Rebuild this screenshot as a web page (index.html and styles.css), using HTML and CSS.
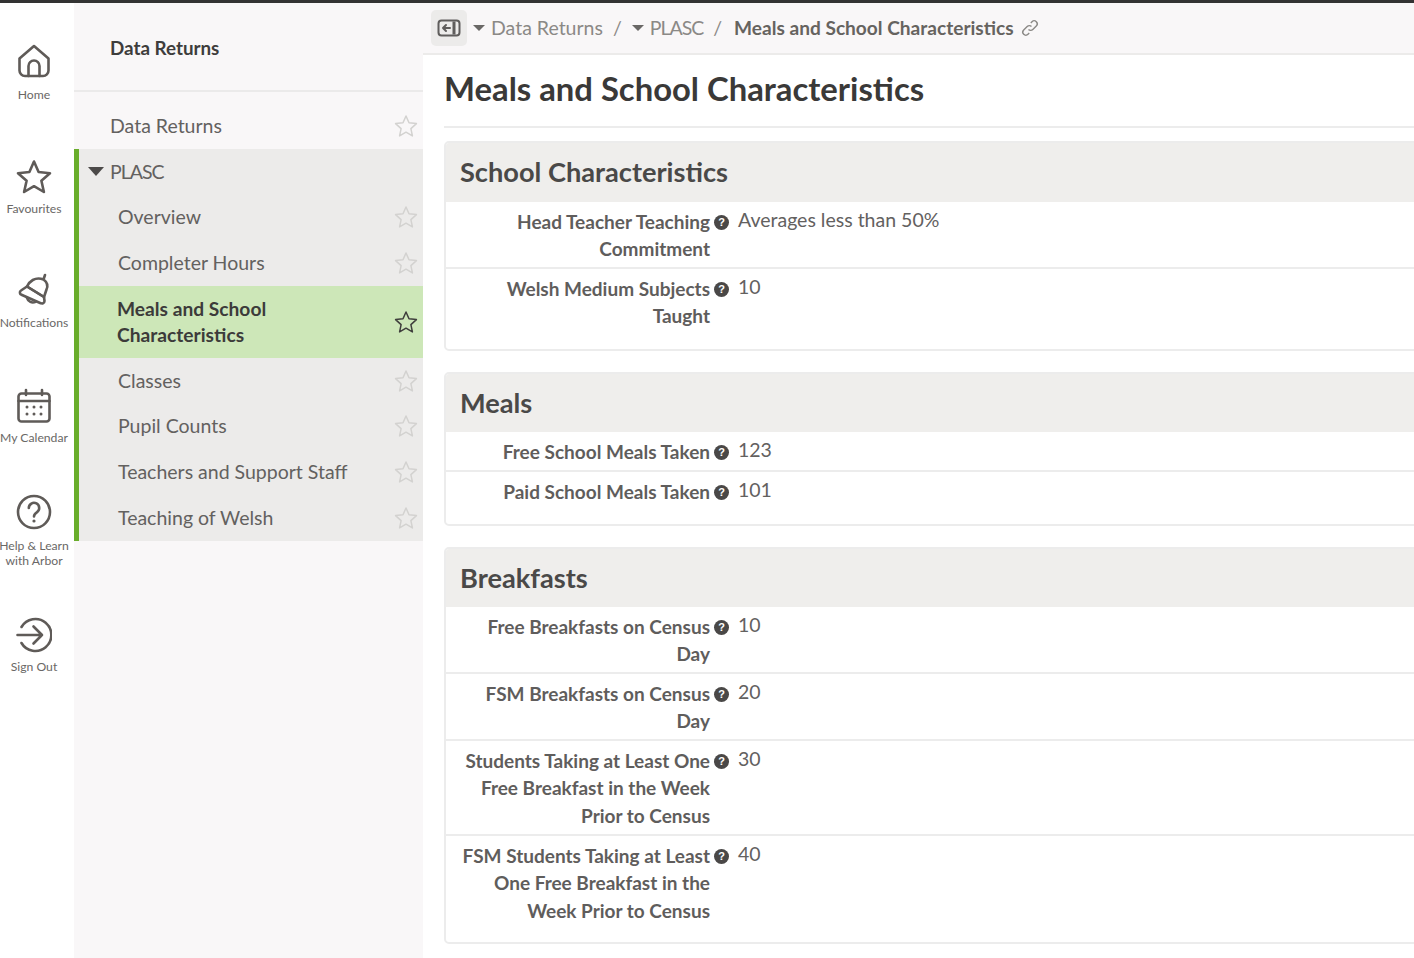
FILE: index.html
```html
<!DOCTYPE html>
<html lang="en">
<head>
<meta charset="utf-8">
<title>Meals and School Characteristics</title>
<link rel="stylesheet" href="styles.css">
</head>
<body>
<div class="topbar"></div>
<div class="app">
  <nav class="rail">
    <a class="rail-item rail-home">
      <svg class="rail-icon" viewBox="0 0 36 36"><path d="M3.5 15.5 L18 3 L32.5 15.5 V27.5 a5.5 5.5 0 0 1 -5.5 5.5 H9 a5.5 5.5 0 0 1 -5.5 -5.5 Z"/><path d="M12.5 33 V23 a5.5 5.5 0 0 1 11 0 V33"/></svg>
      <span>Home</span>
    </a>
    <a class="rail-item rail-fav">
      <svg class="rail-icon" viewBox="0 0 36 36"><path d="M18 2.5 L22.6 13 L34 14.2 L25.4 21.8 L27.9 33 L18 27.2 L8.1 33 L10.6 21.8 L2 14.2 L13.4 13 Z"/></svg>
      <span>Favourites</span>
    </a>
    <a class="rail-item rail-notif">
      <svg class="rail-icon" viewBox="0 0 36 36"><path d="M29 2 L27.5 6.5 C31 9 32 13 30.5 16.5 L28 24 L11 13.5 C13 9 19 3 27.5 6.5"/><path d="M5 17.5 L11 13.5 L28 24 L28.5 28 a2.6 2.6 0 0 1 -3.8 2.2 L5.5 21.8 a2.4 2.4 0 0 1 -.5 -4.3 Z"/><path d="M11 25 a6 6 0 0 0 8.5 3.8"/></svg>
      <span>Notifications</span>
    </a>
    <a class="rail-item rail-cal">
      <svg class="rail-icon" viewBox="0 0 36 36"><rect x="2.5" y="5.5" width="31" height="28" rx="3"/><path d="M2.5 13 H33.5 M10 2 V7 M26 2 V7"/><g class="dots"><circle cx="11" cy="19" r="1.5"/><circle cx="18" cy="19" r="1.5"/><circle cx="25" cy="19" r="1.5"/><circle cx="11" cy="26" r="1.5"/><circle cx="18" cy="26" r="1.5"/><circle cx="25" cy="26" r="1.5"/></g></svg>
      <span>My Calendar</span>
    </a>
    <a class="rail-item rail-help">
      <svg class="rail-icon" viewBox="0 0 36 36"><circle cx="18" cy="18" r="16"/><path d="M12.8 14 a5.2 5.2 0 1 1 8 4.4 c-2 1.3 -2.8 2 -2.8 4"/><circle class="dot" cx="18" cy="27" r="1.6"/></svg>
      <span>Help &amp; Learn<br>with Arbor</span>
    </a>
    <a class="rail-item rail-out">
      <svg class="rail-icon" viewBox="0 0 36 36"><path d="M5.5 10 a16 16 0 1 1 0 16"/><path d="M1.5 18 H26 M17.5 9.5 L26 18 L17.5 26.5"/></svg>
      <span>Sign Out</span>
    </a>
  </nav>

  <aside class="side">
    <div class="side-title">Data Returns</div>
    <div class="side-link root"><span>Data Returns</span><svg class="star" viewBox="0 0 24 24"><path d="M12 2 L15 8.8 L22.4 9.6 L16.9 14.6 L18.4 21.9 L12 18.2 L5.6 21.9 L7.1 14.6 L1.6 9.6 L9 8.8 Z"/></svg></div>
    <div class="group">
      <div class="group-head"><i class="caret"></i><span class="short">PLASC</span></div>
      <div class="side-link"><span>Overview</span><svg class="star" viewBox="0 0 24 24"><path d="M12 2 L15 8.8 L22.4 9.6 L16.9 14.6 L18.4 21.9 L12 18.2 L5.6 21.9 L7.1 14.6 L1.6 9.6 L9 8.8 Z"/></svg></div>
      <div class="side-link"><span>Completer Hours</span><svg class="star" viewBox="0 0 24 24"><path d="M12 2 L15 8.8 L22.4 9.6 L16.9 14.6 L18.4 21.9 L12 18.2 L5.6 21.9 L7.1 14.6 L1.6 9.6 L9 8.8 Z"/></svg></div>
      <div class="side-link active"><span>Meals and School<br>Characteristics</span><svg class="star" viewBox="0 0 24 24"><path d="M12 2 L15 8.8 L22.4 9.6 L16.9 14.6 L18.4 21.9 L12 18.2 L5.6 21.9 L7.1 14.6 L1.6 9.6 L9 8.8 Z"/></svg></div>
      <div class="side-link"><span>Classes</span><svg class="star" viewBox="0 0 24 24"><path d="M12 2 L15 8.8 L22.4 9.6 L16.9 14.6 L18.4 21.9 L12 18.2 L5.6 21.9 L7.1 14.6 L1.6 9.6 L9 8.8 Z"/></svg></div>
      <div class="side-link"><span>Pupil Counts</span><svg class="star" viewBox="0 0 24 24"><path d="M12 2 L15 8.8 L22.4 9.6 L16.9 14.6 L18.4 21.9 L12 18.2 L5.6 21.9 L7.1 14.6 L1.6 9.6 L9 8.8 Z"/></svg></div>
      <div class="side-link"><span>Teachers and Support Staff</span><svg class="star" viewBox="0 0 24 24"><path d="M12 2 L15 8.8 L22.4 9.6 L16.9 14.6 L18.4 21.9 L12 18.2 L5.6 21.9 L7.1 14.6 L1.6 9.6 L9 8.8 Z"/></svg></div>
      <div class="side-link"><span>Teaching of Welsh</span><svg class="star" viewBox="0 0 24 24"><path d="M12 2 L15 8.8 L22.4 9.6 L16.9 14.6 L18.4 21.9 L12 18.2 L5.6 21.9 L7.1 14.6 L1.6 9.6 L9 8.8 Z"/></svg></div>
    </div>
  </aside>

  <main class="main">
    <div class="crumbs">
      <span class="toggle"><svg viewBox="0 0 24 20"><rect x="1.5" y="2.5" width="21" height="15" rx="3"/><path class="bar" d="M17 3.5 V16.5"/><path d="M13 10 H6 M9 7 L6 10 L9 13"/></svg></span>
      <i class="caret small"></i><span class="crumb">Data Returns</span><span class="sep">/</span>
      <i class="caret small"></i><span class="crumb short">PLASC</span><span class="sep">/</span>
      <strong class="crumb-current">Meals and School Characteristics</strong>
      <svg class="link-icon" viewBox="0 0 20 20"><path d="M8.5 11.5 a3 3 0 0 0 4.3 0 l3.5 -3.5 a3 3 0 0 0 -4.3 -4.3 l-1.2 1.2"/><path d="M11.5 8.5 a3 3 0 0 0 -4.3 0 l-3.5 3.5 a3 3 0 0 0 4.3 4.3 l1.2 -1.2"/></svg>
    </div>
    <div class="content">
      <h1>Meals and School Characteristics</h1>

      <section class="card">
        <h2>School Characteristics</h2>
        <div class="row h67"><div class="label">Head Teacher Teaching<br>Commitment</div><i class="q">?</i><div class="value">Averages less than 50%</div></div>
        <div class="row h80 last"><div class="label">Welsh Medium Subjects<br>Taught</div><i class="q">?</i><div class="value">10</div></div>
      </section>

      <section class="card">
        <h2>Meals</h2>
        <div class="row h40"><div class="label">Free School Meals Taken</div><i class="q">?</i><div class="value">123</div></div>
        <div class="row h53 last"><div class="label">Paid School Meals Taken</div><i class="q">?</i><div class="value">101</div></div>
      </section>

      <section class="card">
        <h2>Breakfasts</h2>
        <div class="row h67"><div class="label">Free Breakfasts on Census<br>Day</div><i class="q">?</i><div class="value">10</div></div>
        <div class="row h67"><div class="label">FSM Breakfasts on Census<br>Day</div><i class="q">?</i><div class="value">20</div></div>
        <div class="row h95"><div class="label">Students Taking at Least One<br>Free Breakfast in the Week<br>Prior to Census</div><i class="q">?</i><div class="value">30</div></div>
        <div class="row h105 last"><div class="label">FSM Students Taking at Least<br>One Free Breakfast in the<br>Week Prior to Census</div><i class="q">?</i><div class="value">40</div></div>
      </section>
    </div>
  </main>
</div>
</body>
</html>
```
FILE: styles.css
```css
* { box-sizing: border-box; }
html, body { margin: 0; height: 100%; overflow: hidden; }
body { font-family: "Lato", "Noto Sans", sans-serif; font-size: 19.5px; color: #5f5d5c; background: #fff; }
.topbar { height: 3px; background: #333; }
.app { display: flex; height: 955px; }

.rail { width: 74px; flex: none; background: #fff; padding-right: 6px; }
.rail-item { display: flex; flex-direction: column; align-items: center; font-size: 12.2px; line-height: 15px; color: #6a6866; text-align: center; white-space: nowrap; }
.rail-icon { width: 36px; height: 36px; fill: none; stroke: #5f5b58; stroke-width: 2.6; stroke-linejoin: round; stroke-linecap: round; margin-bottom: 6px; }
.rail-icon .dots circle, .rail-icon .dot { fill: #5f5b58; stroke: none; }
.rail-home { padding-top: 40px; }
.rail-home .rail-icon { margin-bottom: 8px; }
.rail-fav { padding-top: 57px; }
.rail-notif { padding-top: 57px; }
.rail-cal { padding-top: 58px; }
.rail-help { padding-top: 49px; }
.rail-help .rail-icon { margin-bottom: 8px; }
.rail-out { padding-top: 49px; }

.side { width: 349px; flex: none; background: #f9f7f8; }
.side-title { height: 89px; padding: 33px 0 0 36px; font-weight: 700; font-size: 18.8px; line-height: 24px; color: #3e3d3c; border-bottom: 2px solid #ebeaea; }
.side-link { display: flex; align-items: center; justify-content: space-between; min-height: 45.75px; padding: 0 5px 1px 44px; font-size: 19.5px; line-height: 26px; color: #63615f; }
.side-link.root { padding: 10px 5px 0 36px; height: 57px; }
.star { width: 24px; height: 24px; flex: none; fill: none; stroke: #d3d2d0; stroke-width: 1.5; stroke-linejoin: round; }
.group { background: #ecebea; border-left: 5px solid #69ad2b; }
.group-head { display: flex; align-items: center; height: 45.75px; padding: 0 0 1px 9px; color: #63615f; }
.group .side-link { padding-left: 39px; }
.caret { display: inline-block; width: 0; height: 0; border-left: 8px solid transparent; border-right: 8px solid transparent; border-top: 9px solid #4c4a49; }
.group-head .caret { margin-right: 6px; }
.short { letter-spacing: -1px; }
.group .side-link.active { min-height: 72px; background: #cde7b8; color: #3c3b3a; font-weight: 700; padding-left: 38px; font-size: 19.2px; }
.side-link.active .star { stroke: #3f3e3c; }

.main { flex: 1; min-width: 0; }
.crumbs { display: flex; align-items: center; height: 52px; padding: 0 0 1px 8px; background: #f9f7f8; border-bottom: 2px solid #ecebea; color: #8b8986; white-space: nowrap; }
.toggle { display: flex; align-items: center; justify-content: center; width: 36px; height: 36px; border-radius: 5px; background: #ecebea; margin-right: 6px; }
.toggle svg { width: 24px; height: 20px; fill: none; stroke: #5f5d5c; stroke-width: 2; stroke-linecap: round; stroke-linejoin: round; }
.toggle .bar { stroke-width: 3; stroke-linecap: butt; }
.caret.small { border-left-width: 6px; border-right-width: 6px; border-top-width: 6px; border-top-color: #6a6866; margin-right: 6px; }
.sep { margin: 0 10px; }
.crumb-current { color: #66635f; font-weight: 700; font-size: 19.1px; margin-left: 2px; }
.link-icon { width: 20px; height: 20px; margin-left: 6px; fill: none; stroke: #8b8986; stroke-width: 1.4; }

.content { padding: 0 0 0 21px; margin-right: -40px; }
h1 { margin: 0; height: 73px; padding-top: 12px; font-size: 32.8px; line-height: 44px; font-weight: 700; color: #3a3938; border-bottom: 2px solid #ececec; }
.card { margin-top: 13px; border: 2px solid #ececec; border-radius: 5px; overflow: hidden; background: #fff; }
.card + .card { margin-top: 20.5px; }
h2 { margin: -1px 0 0; height: 59.5px; padding: 0 14px; background: #efeeec; font-size: 27.2px; line-height: 60px; font-weight: 700; color: #4a4948; }
.row { display: grid; grid-template-columns: 264px 28px 1fr; align-items: start; border-bottom: 2px solid #ececec; padding-top: 6px; }
.row.last { border-bottom: 0; }
.h40 { height: 40px; } .h53 { height: 52px; } .h67 { height: 67px; } .h80 { height: 80.5px; } .h95 { height: 95px; } .h105 { height: 105.5px; }
.label { text-align: right; font-weight: 700; font-size: 19px; line-height: 27.4px; color: #5f5d5c; }
.q { display: block; width: 15px; height: 15px; margin: 7px 0 0 4px; border-radius: 50%; background: #4a4847; color: #fff; font: 700 11px/15px "Liberation Sans", sans-serif; text-align: center; }
.value { font-size: 19.5px; line-height: 24px; color: #63615f; }
```
